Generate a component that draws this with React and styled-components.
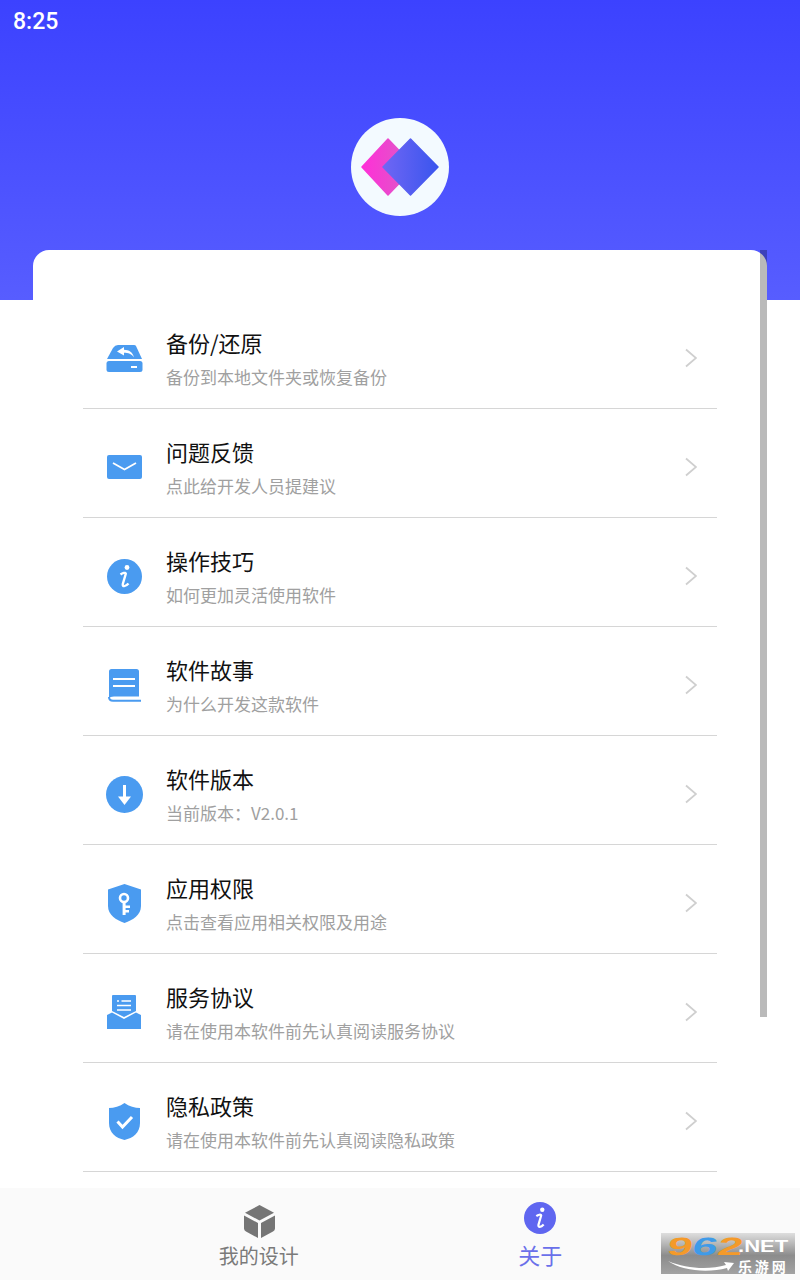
import React from "react";
import styled, { createGlobalStyle } from "styled-components";

const GlobalStyle = createGlobalStyle`
  * { box-sizing: border-box; }
  html, body { margin: 0; padding: 0; background: #fff; }
  body { font-family: "Noto Sans CJK SC", "Noto Sans", sans-serif; }
`;

const BLUE = "#4a9bf0";

const BackupIcon = () => (
  <svg width="37" height="27" viewBox="0 0 37 27">
    <path d="M12 0 H28 Q29.5 0 30 1 L36 14 H1 L7 3 Q9 0 12 0 Z" fill={BLUE} />
    <rect x="0.5" y="16" width="36" height="11" rx="2.5" fill={BLUE} />
    <rect x="25" y="21" width="6" height="2" fill="#fff" />
    <path d="M18 2 L11 6.5 L18 10.5 V7.8 C22 7.8 26 9 28 12.5 C27 7.5 23 4.8 18 4.8 Z" fill="#fff" />
  </svg>
);

const MailIcon = () => (
  <svg width="35" height="24" viewBox="0 0 35 24">
    <rect width="35" height="24" rx="2" fill={BLUE} />
    <path d="M6 8 L17.5 14.5 L29 8" fill="none" stroke="#fff" strokeWidth="1.8" />
  </svg>
);

const InfoIcon = ({ size = 35, color = BLUE }) => (
  <svg width={size} height={size} viewBox="0 0 35 35">
    <circle cx="17.5" cy="17.5" r="17.5" fill={color} />
    <circle cx="20" cy="8.5" r="2.4" fill="#fff" />
    <path d="M13.5 15.5 C15.5 14 18.5 13 18.8 14.8 L15.8 25 C15.2 28 18.5 27.8 21.5 24.5" fill="none" stroke="#fff" strokeWidth="2.4" />
  </svg>
);

const BookIcon = () => (
  <svg width="33" height="34" viewBox="0 0 33 34">
    <path d="M3.5 1 H28.5 Q31 1 31 3.5 V28.5 H6 Q2 28.5 1 30.5 V3.5 Q1 1 3.5 1 Z" fill={BLUE} />
    <path d="M1 29 C1 32 3 32.8 5 32.8 H33" fill="none" stroke={BLUE} strokeWidth="2" />
    <path d="M5 11 H27 M5 18 H27" stroke="#fff" strokeWidth="2" />
  </svg>
);

const DownloadIcon = () => (
  <svg width="37" height="37" viewBox="0 0 37 37">
    <circle cx="18.5" cy="18.5" r="18.5" fill={BLUE} />
    <rect x="17" y="9" width="3" height="13" fill="#fff" />
    <path d="M12 20.5 H25 L18.5 29 Z" fill="#fff" />
  </svg>
);

const KeyShieldIcon = () => (
  <svg width="33" height="39" viewBox="0 0 33 39">
    <path d="M16.5 0 L33 5.5 V22 C33 31 25 36 16.5 39 C8 36 0 31 0 22 V5.5 Z" fill={BLUE} />
    <circle cx="16" cy="14" r="4" fill="none" stroke="#fff" strokeWidth="2.6" />
    <path d="M14.6 17 H17.6 V21.5 H22 V24 H17.6 V26 H21 V28.5 H17.6 V31 H14.6 Z" fill="#fff" />
  </svg>
);

const AgreementIcon = () => (
  <svg width="34" height="34" viewBox="0 0 34 34">
    <path d="M5 1 Q5 0 6 0 H28 Q29 0 29 1 V16 L17 22 L5 16 Z" fill={BLUE} />
    <path d="M0 20 L5 17.5 L17 24 L29 17.5 L34 20 V34 H0 Z" fill={BLUE} />
    <path d="M10 6 H12 M14.5 6 H24 M10 10.5 H24 M10 15 H24" stroke="#fff" strokeWidth="1.6" />
  </svg>
);

const CheckShieldIcon = () => (
  <svg width="31" height="37" viewBox="0 0 31 37">
    <path d="M15.5 0 C20 3.5 26 5 31 5 V20 C31 30 24 35 15.5 37 C7 35 0 30 0 20 V5 C5 5 11 3.5 15.5 0 Z" fill={BLUE} />
    <path d="M8.5 18.5 L13.5 24 L23 14" fill="none" stroke="#fff" strokeWidth="3" />
  </svg>
);

const CubeIcon = () => (
  <svg width="31" height="33" viewBox="0 0 31 33">
    <path d="M15.5 0 L30 7.8 L15.5 15.5 L1 7.8 Z" fill="#757575" />
    <path d="M0 10.5 L14 18 V33 L2 26.5 Q0 25.5 0 23.5 Z" fill="#757575" />
    <path d="M31 10.5 L17 18 V33 L29 26.5 Q31 25.5 31 23.5 Z" fill="#757575" />
  </svg>
);

const LogoMark = () => (
  <svg width="78" height="58" viewBox="0 0 78 58">
    <defs>
      <linearGradient id="pink" x1="0" y1="0" x2="1" y2="0">
        <stop offset="0" stopColor="#ff2fd8" />
        <stop offset="1" stopColor="#d95fc4" />
      </linearGradient>
      <linearGradient id="blue" x1="0" y1="0" x2="1" y2="0">
        <stop offset="0" stopColor="#6f66f4" />
        <stop offset="1" stopColor="#3a55ee" />
      </linearGradient>
    </defs>
    <path d="M27 1 L54 29 L27 57 L1 29 Z" fill="url(#pink)" stroke="url(#pink)" strokeWidth="1.5" strokeLinejoin="round" />
    <path d="M49.5 1 L77 29 L49.5 57 L22 29 Z" fill="url(#blue)" stroke="url(#blue)" strokeWidth="1.5" strokeLinejoin="round" />
  </svg>
);

const items = [
  { title: "备份/还原", desc: "备份到本地文件夹或恢复备份", Icon: BackupIcon },
  { title: "问题反馈", desc: "点此给开发人员提建议", Icon: MailIcon },
  { title: "操作技巧", desc: "如何更加灵活使用软件", Icon: InfoIcon },
  { title: "软件故事", desc: "为什么开发这款软件", Icon: BookIcon },
  { title: "软件版本", desc: "当前版本：V2.0.1", Icon: DownloadIcon },
  { title: "应用权限", desc: "点击查看应用相关权限及用途", Icon: KeyShieldIcon },
  { title: "服务协议", desc: "请在使用本软件前先认真阅读服务协议", Icon: AgreementIcon },
  { title: "隐私政策", desc: "请在使用本软件前先认真阅读隐私政策", Icon: CheckShieldIcon },
];

export default function App() {
  return (
    <>
      <GlobalStyle />
      <Page>
        <Header>
          <Time>8:25</Time>
          <Logo>
            <LogoMark />
          </Logo>
        </Header>
        <Card>
          <ScrollThumb />
          <List>
            {items.map(({ title, desc, Icon }) => (
              <Row key={title}>
                <IconBox>
                  <Icon />
                </IconBox>
                <RowText>
                  <RowTitle>{title}</RowTitle>
                  <RowDesc>{desc}</RowDesc>
                </RowText>
                <Chevron viewBox="0 0 12 20" fill="none">
                  <path d="M1 1.5 L11 10 L1 18.5" stroke="#cfcfcf" strokeWidth="1.8" />
                </Chevron>
              </Row>
            ))}
          </List>
        </Card>
        <BottomNav>
          <Tab>
            <TabIcon $top={17} $shift={1}>
              <CubeIcon />
            </TabIcon>
            <TabLabel>我的设计</TabLabel>
          </Tab>
          <Tab>
            <TabIcon $top={14}>
              <InfoIcon size={32} color="#5f66f0" />
            </TabIcon>
            <TabLabel $active>关于</TabLabel>
          </Tab>
          <Watermark>
            <WatermarkLeft>
              <Digits>
                9<BlueDigit>6</BlueDigit>2
              </Digits>
              <Swoosh viewBox="0 0 66 12" fill="none">
                <path d="M0 1 C18 9 42 10 58 5 L56 2 L66 3 L60 11 L59 8 C40 13 14 11 0 1 Z" fill="#fff" />
              </Swoosh>
            </WatermarkLeft>
            <WatermarkRight>
              <NetText>.NET</NetText>
              <SiteName>乐游网</SiteName>
            </WatermarkRight>
          </Watermark>
        </BottomNav>
      </Page>
    </>
  );
}

const Page = styled.div`
  width: 800px;
  height: 1280px;
  overflow: hidden;
  display: flex;
  flex-direction: column;
  background: #fff;
`;

const Header = styled.header`
  height: 300px;
  flex: none;
  padding: 10px 13px 0;
  display: flex;
  flex-direction: column;
  background: linear-gradient(180deg, #3c42ff 0%, #575dff 100%);
`;

const Time = styled.div`
  font-family: Roboto, "Liberation Sans", sans-serif;
  font-size: 23px;
  font-weight: 500;
  line-height: 24px;
  color: #fff;
`;

const Logo = styled.div`
  align-self: center;
  width: 98px;
  height: 98px;
  margin-top: 84px;
  border-radius: 50%;
  background: #f3faff;
  display: flex;
  align-items: center;
  justify-content: center;
`;

const Card = styled.main`
  position: relative;
  flex: none;
  height: 938px;
  margin: -50px 33px 0;
  padding: 50px 50px 0;
  background: #fff;
  border-radius: 16px 16px 0 0;
`;

const ScrollThumb = styled.div`
  position: absolute;
  top: 0;
  right: 0;
  width: 7px;
  height: 767px;
  background: rgba(0, 0, 0, 0.27);
`;

const List = styled.div`
  display: flex;
  flex-direction: column;
`;

const Row = styled.div`
  height: 109px;
  padding: 8px 20px 0 21px;
  display: flex;
  align-items: center;
  border-bottom: 1px solid #d6d6d6;
`;

const IconBox = styled.div`
  width: 40px;
  height: 40px;
  flex: none;
  display: flex;
  align-items: center;
  justify-content: center;
`;

const RowText = styled.div`
  flex: 1;
  margin-left: 22px;
  margin-top: -1px;
`;

const RowTitle = styled.div`
  font-size: 22px;
  line-height: 32px;
  color: #111;
`;

const RowDesc = styled.div`
  font-size: 17px;
  line-height: 26px;
  margin-top: 6px;
  color: #a0a0a0;
`;

const Chevron = styled.svg`
  width: 12px;
  height: 20px;
  flex: none;
`;

const BottomNav = styled.nav`
  position: relative;
  flex: none;
  height: 92px;
  padding: 0 119px 0 118px;
  display: grid;
  grid-template-columns: 1fr 1fr;
  background: #fafafa;
`;

const Tab = styled.div`
  display: flex;
  flex-direction: column;
  align-items: center;
`;

const TabIcon = styled.div`
  height: 53px;
  padding-top: ${(p) => p.$top}px;
  padding-left: ${(p) => (p.$shift || 0) * 2}px;
  display: flex;
  justify-content: center;
`;

const TabLabel = styled.div`
  font-size: ${(p) => (p.$active ? "22px" : "20px")};
  line-height: ${(p) => (p.$active ? "26px" : "30px")};
  color: ${(p) => (p.$active ? "#6a70ea" : "#7a7a7a")};
`;

const Watermark = styled.div`
  position: absolute;
  left: 661px;
  top: 45px;
  width: 134px;
  height: 41px;
  padding: 2px 3px 0 7px;
  display: flex;
  justify-content: space-between;
  background: linear-gradient(180deg, #dedede 0%, #8c8c8c 55%, #a2a2a2 100%);
`;

const WatermarkLeft = styled.div`
  width: 71px;
  display: flex;
  flex-direction: column;
`;

const Digits = styled.div`
  font-family: "Liberation Sans", sans-serif;
  font-size: 25px;
  font-weight: 700;
  line-height: 22px;
  color: #f49a2a;
  transform-origin: left center;
  transform: skewX(-12deg) scaleX(1.8);
  white-space: nowrap;
`;

const BlueDigit = styled.span`
  color: #3f9be8;
`;

const Swoosh = styled.svg`
  width: 66px;
  height: 12px;
  margin-top: 3px;
`;

const WatermarkRight = styled.div`
  width: 55px;
  display: flex;
  flex-direction: column;
  align-items: flex-start;
`;

const NetText = styled.div`
  font-family: "Liberation Sans", sans-serif;
  font-size: 17px;
  font-weight: 700;
  line-height: 20px;
  margin-top: 2px;
  color: #fff;
  transform-origin: left center;
  transform: scaleX(1.3);
`;

const SiteName = styled.div`
  font-size: 14px;
  font-weight: 700;
  line-height: 16px;
  letter-spacing: 3px;
  margin-top: 1px;
  color: #fff;
`;
